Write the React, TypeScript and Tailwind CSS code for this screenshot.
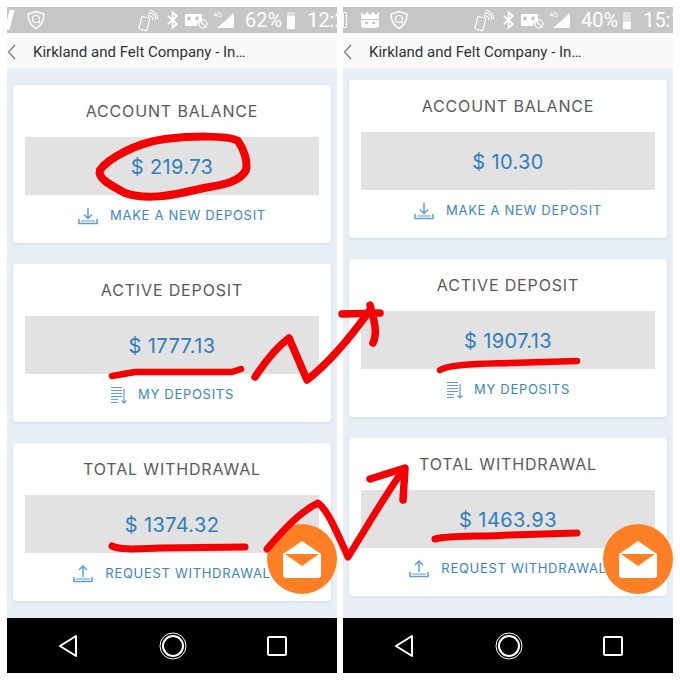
import React from 'react';

const sans = "font-['Inter','Liberation_Sans',sans-serif]";

// --- Status bar glyphs ---
const Shield = () => (
  <svg width="20" height="20" viewBox="0 0 20 20" fill="none" stroke="#fff" strokeWidth="1.5">
    <path d="M10 1.500 18 4c0 7-2.500 11.500-8 14.500C4.500 15.500 2 11 2 4z" />
    <circle cx="10" cy="9" r="3.500" strokeWidth="1.200" />
    <path d="M12.500 11.500 14 13" strokeWidth="1.200" />
  </svg>
);

const Crown = () => (
  <svg width="18" height="18" viewBox="0 0 18 18" fill="#fff">
    <path d="M0 1l3 3 3-3 3 3 3-3 3 3 3-3v7H0z" />
    <path d="M0 9h18v7l-4 1H4l-4-1zm4 2v2h3v-2zm7 0v2h3v-2z" fillRule="evenodd" />
  </svg>
);

const StatusIcons = ({ battery, time, fill }: { battery: string; time: string; fill: number }) => (
  <div className="flex shrink-0 items-center text-white">
    <svg width="21" height="24" viewBox="0 0 21 24" fill="none" stroke="#fff" strokeWidth="1.100">
      <rect x="2.500" y="9" width="8" height="13" rx="1" transform="rotate(14 6 15)" />
      <path d="M10 8a4 4 0 0 1 5 4M10 5a7 7 0 0 1 8 7M11 2a10 10 0 0 1 9 9" />
    </svg>
    <svg width="11" height="18" viewBox="0 0 11 18" fill="none" stroke="#fff" strokeWidth="1.700" className="ml-2">
      <path d="M1 5l9 8-4.500 4V1L10 5l-9 8" />
    </svg>
    <svg width="24" height="18" viewBox="0 0 24 18" fill="#fff" className="ml-[7px]">
      <path d="M0 3h17v6a6 6 0 0 0-5 6H0zm4 2.500a2 2 0 1 0 0 4 2 2 0 0 0 0-4zm8 0a2 2 0 1 0 0 4 2 2 0 0 0 0-4z" fillRule="evenodd" />
      <circle cx="18" cy="13" r="4" fill="none" stroke="#fff" strokeWidth="1.200" />
      <path d="M15 10l6 6" stroke="#fff" strokeWidth="1.200" />
    </svg>
    <svg width="22" height="20" viewBox="0 0 22 20" fill="#fff" className="ml-[4px]">
      <path d="M21 3v15H4z" />
      <text x="0" y="7" fontSize="7" fontFamily="Roboto, sans-serif">4G</text>
    </svg>
    <span className="ml-[10px] font-['Roboto',sans-serif] text-[20px] leading-none">{battery}</span>
    <div className="relative ml-[5px] h-[17px] w-[8px] bg-white/45">
      <div className="absolute inset-x-0 bottom-0 bg-white" style={{ height: `${fill}%` }} />
    </div>
    <span className="ml-[12px] font-['Roboto',sans-serif] text-[20px] leading-none">{time}</span>
  </div>
);

// --- Link icons ---
const DepositIcon = () => (
  <svg width="20" height="18" viewBox="0 0 20 18" fill="none" stroke="#5f9fd4" strokeWidth="1.500">
    <path d="M10 1v10M6 7.500l4 4 4-4M1 12v4.500h18V12" />
    <path d="M3 14h14" strokeWidth="1" />
  </svg>
);

const ListIcon = () => (
  <svg width="17" height="18" viewBox="0 0 17 18" fill="none" stroke="#5f9fd4" strokeWidth="1.200">
    <path d="M1 1.500h11M1 4.500h11M1 7.500h11M1 10.500h11M1 13.500h7M1 16.500h7M14 3v14M11.500 14.500l2.500 2.500 2.500-2.500" />
  </svg>
);

const WithdrawIcon = () => (
  <svg width="20" height="18" viewBox="0 0 20 18" fill="none" stroke="#5f9fd4" strokeWidth="1.500">
    <path d="M10 12V1.500M6 5l4-4 4 4M1 12v4.500h18V12" />
    <path d="M3 14h14" strokeWidth="1" />
  </svg>
);

type CardProps = { title: string; value: string; action: string; icon: React.ReactNode; gap: string };

const Card = ({ title, value, action, icon, gap }: CardProps) => (
  <div className="h-[158px] rounded-[4px] bg-white px-3 shadow-[0_1px_3px_rgba(120,140,160,0.2)]">
    <div className={`${sans} pt-[16px] text-center text-[16px] leading-[20px] tracking-[0.85px] text-[#5a5a5a]`}>{title}</div>
    <div className={`${sans} mt-[16px] flex h-[58px] items-center justify-center bg-[#e2e2e2] pt-[1px] text-[20px] tracking-[0.4px] text-[#2f7dbd]`}>
      {value}
    </div>
    <div className={`${sans} mt-[11px] flex items-center justify-center text-[13px] tracking-[0.7px] text-[#3a86c2] ${gap}`}>
      {icon}
      <span>{action}</span>
    </div>
  </div>
);

const Mail = () => (
  <div className="absolute bottom-[24px] right-0 flex h-[70px] w-[70px] items-center justify-center rounded-full bg-[#ff7f24]">
    <svg width="38" height="37" viewBox="0 0 38 37">
      <path d="M0 13 19 0l19 13v21a3 3 0 0 1-3 3H3a3 3 0 0 1-3-3z" fill="#fff" />
      <path d="M2 13h34L19 25z" fill="#ff7f24" />
    </svg>
  </div>
);

type PhoneProps = {
  left: React.ReactNode;
  battery: string;
  time: string;
  fill: number;
  pad: string;
  values: string[];
};

const Phone = ({ left, battery, time, fill, pad, values }: PhoneProps) => (
  <div className="flex h-[666px] w-[330px] flex-col overflow-hidden">
    <div className="flex h-[26px] shrink-0 items-center overflow-hidden bg-[#c6c6c6]">
      <div className="flex w-[131px] shrink-0 items-center">{left}</div>
      <StatusIcons battery={battery} time={time} fill={fill} />
    </div>
    <div className="flex h-[35px] shrink-0 items-center bg-[#fafafa] pt-[3px] text-[#444]">
      <svg width="10" height="16" viewBox="0 0 10 16" fill="none" stroke="#777" strokeWidth="1.200">
        <path d="M8 1 1.500 8 8 15" />
      </svg>
      <span className="ml-[16px] font-['Roboto',sans-serif] text-[15px] text-[#2e3238]">Kirkland and Felt Company - In…</span>
    </div>
    <div className={`relative flex flex-1 flex-col gap-[21px] bg-[#e8eff6] px-[6px] ${pad}`}>
      <Card title="ACCOUNT BALANCE" value={values[0]} action="MAKE A NEW DEPOSIT" icon={<DepositIcon />} gap="gap-3" />
      <Card title="ACTIVE DEPOSIT" value={values[1]} action="MY DEPOSITS" icon={<ListIcon />} gap="gap-[11px]" />
      <Card title="TOTAL WITHDRAWAL" value={values[2]} action="REQUEST WITHDRAWAL" icon={<WithdrawIcon />} gap="gap-3" />
      <Mail />
    </div>
    <div className="flex h-[55px] shrink-0 items-center bg-black">
      <div className="flex w-full items-center justify-between pl-[51px] pr-[50px]">
        <svg width="20" height="24" viewBox="0 0 20 24" fill="none" stroke="#fff" strokeWidth="2">
          <path d="M18 2v20L2 12z" strokeLinejoin="round" />
        </svg>
        <svg width="28" height="28" viewBox="0 0 28 28" fill="none" stroke="#fff">
          <circle cx="14" cy="14" r="13" strokeWidth="1" />
          <circle cx="14" cy="14" r="10" strokeWidth="2" />
        </svg>
        <svg width="20" height="20" viewBox="0 0 20 20" fill="none" stroke="#fff" strokeWidth="2">
          <rect x="1" y="1" width="18" height="18" rx="1" />
        </svg>
      </div>
    </div>
  </div>
);

// Red marker strokes scribbled over the whole picture
const Scribbles = () => (
  <svg className="pointer-events-none absolute left-0 top-0" width="680" height="680" fill="none" stroke="#f50000" strokeWidth="6.500" strokeLinecap="round" strokeLinejoin="round">
    <path d="M238 141C228 135 190 136 165 139 135 143 108 159 100 170 97 178 110 185 125 193 145 200 170 196 195 190 215 185 238 185 246 170 248 160 243 148 238 141Z" strokeWidth="8" />
    <path d="M112 376 135 372 200 372 232 372 241 369" />
    <path d="M255 377C265 362 277 347 289 338L307 380C330 362 350 338 370 310" strokeWidth="7.500" />
    <path d="M342 314 380 313M370 305C374 320 378 332 373 343" strokeWidth="7.500" />
    <path d="M112 546C120 550 135 549 160 548L245 547" strokeWidth="7" />
    <path d="M267 549C285 528 300 512 318 503 328 510 338 535 348 557 365 530 385 495 404 469" strokeWidth="7" />
    <path d="M370 479 405 468 403 500" strokeWidth="7.500" />
    <path d="M440 370C450 364 480 364 510 363L577 361" strokeWidth="6.500" />
    <path d="M435 539C450 535 480 537 510 535L577 533" strokeWidth="7" />
  </svg>
);

const App: React.FC = () => {
  return (
    <div className="relative h-[680px] w-[680px] overflow-hidden bg-white">
      <div className="flex gap-[6px] pl-[7px] pt-[7px]">
        <Phone
          left={
            <>
              <div className="h-[20px] w-[5px] skew-x-[-15deg] bg-white" />
              <div className="ml-[14px]"><Shield /></div>
            </>
          }
          battery="62%"
          time="12:2"
          fill={75}
          pad="pt-[17px]"
          values={['$ 219.73', '$ 1777.13', '$ 1374.32']}
        />
        <Phone
          left={
            <>
              <div className="h-[16px] w-[4px] rounded-[1px] border border-white" />
              <div className="ml-[14px]"><Crown /></div>
              <div className="ml-[10px]"><Shield /></div>
            </>
          }
          battery="40%"
          time="15:1"
          fill={40}
          pad="pt-[12px]"
          values={['$ 10.30', '$ 1907.13', '$ 1463.93']}
        />
      </div>
      <Scribbles />
    </div>
  );
};

export default App;
